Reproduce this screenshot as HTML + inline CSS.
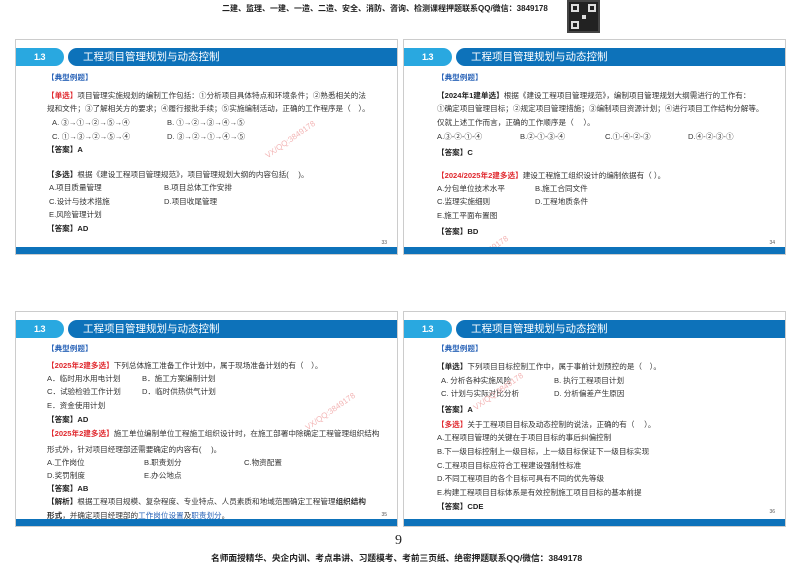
<!DOCTYPE html>
<html><head><meta charset="utf-8"><style>
*{margin:0;padding:0;box-sizing:border-box}
body{width:800px;height:566px;background:#fff;position:relative;overflow:hidden;font-family:"Liberation Sans","Noto Sans CJK SC",sans-serif;color:#333}
.s{position:absolute;width:383px;height:216px;border:1px solid #ccc;background:#fff;overflow:hidden}
.tab{position:absolute;left:0;top:8px;width:48px;height:18px;background:#29a8e0;border-radius:0 9px 9px 0;color:#fff;font-weight:bold;font-size:9px;line-height:18px;padding-left:18px;letter-spacing:-0.5px}
.bar{position:absolute;left:52px;right:0;top:8px;height:18px;background:#0d72ba;border-radius:9px 0 0 9px;color:#fff;font-size:10.5px;line-height:18px;padding-left:15px}
.bot{position:absolute;left:0;right:0;bottom:0;height:7px;background:#0d72ba}
.pn{position:absolute;right:10px;font-size:5px;color:#555}
.l{position:absolute;font-size:7.6px;line-height:10px;white-space:nowrap;color:#333}
.b{font-weight:bold;color:#222}
.r{color:#e0282e;font-weight:bold}
.bl{color:#2a64b8;font-weight:bold}
.u{color:#2a64b8;text-decoration:underline}
.wm{position:absolute;font-size:8px;color:#f3b5b5;transform:rotate(-35deg);white-space:nowrap}
</style></head><body>
<div style="position:absolute;left:222px;top:3px;font-size:8px;font-weight:bold;color:#222;white-space:nowrap">二建、监理、一建、一造、二造、安全、消防、咨询、检测课程押题联系QQ/微信：3849178</div>
<div style="position:absolute;left:567px;top:0;width:33px;height:33px;background:#222;border:2px solid #444">
<div style="position:absolute;left:2px;top:2px;width:8px;height:8px;border:2px solid #ddd"></div>
<div style="position:absolute;right:2px;top:2px;width:8px;height:8px;border:2px solid #ddd"></div>
<div style="position:absolute;left:2px;bottom:2px;width:8px;height:8px;border:2px solid #ddd"></div>
<div style="position:absolute;left:13px;top:13px;width:4px;height:4px;background:#ddd"></div>
</div>

<!-- slide 1 -->
<div class="s" style="left:15px;top:39px">
<div class="tab">1.3</div><div class="bar">工程项目管理规划与动态控制</div>
<div class="l bl" style="left:31px;top:33px">【典型例题】</div>
<div class="l" style="left:31px;top:51px"><span class="r">【单选】</span>项目管理实施规划的编制工作包括：①分析项目具体特点和环境条件；②熟悉相关的法</div>
<div class="l" style="left:31px;top:64px">规和文件；③了解相关方的要求；④履行报批手续；⑤实施编制活动，正确的工作程序是（　）。</div>
<div class="l" style="left:36px;top:78px">A. ③→①→②→⑤→④</div><div class="l" style="left:151px;top:78px">B. ①→②→③→④→⑤</div>
<div class="l" style="left:36px;top:92px">C. ①→③→②→⑤→④</div><div class="l" style="left:151px;top:92px">D. ③→②→①→④→⑤</div>
<div class="l b" style="left:31px;top:105px">【答案】A</div>
<div class="l" style="left:31px;top:130px"><span class="b">【多选】</span>根据《建设工程项目管理规范》，项目管理规划大纲的内容包括(　 )。</div>
<div class="l" style="left:33px;top:143px">A.项目质量管理</div><div class="l" style="left:148px;top:143px">B.项目总体工作安排</div>
<div class="l" style="left:33px;top:157px">C.设计与技术措施</div><div class="l" style="left:148px;top:157px">D.项目收尾管理</div>
<div class="l" style="left:33px;top:170px">E.风险管理计划</div>
<div class="l b" style="left:31px;top:184px">【答案】AD</div>
<div class="pn" style="top:200px">33</div>
<div class="wm" style="left:245px;top:95px">VX/QQ:3849178</div>
<div class="bot"></div>
</div>

<!-- slide 2 -->
<div class="s" style="left:403px;top:39px">
<div class="tab">1.3</div><div class="bar">工程项目管理规划与动态控制</div>
<div class="l bl" style="left:33px;top:33px">【典型例题】</div>
<div class="l" style="left:33px;top:51px"><span class="b">【2024年1建单选】</span>根据《建设工程项目管理规范》，编制项目管理规划大纲需进行的工作有：</div>
<div class="l" style="left:33px;top:64px">①确定项目管理目标；②规定项目管理措施；③编制项目资源计划；④进行项目工作结构分解等。</div>
<div class="l" style="left:33px;top:78px">仅就上述工作而言，正确的工作顺序是（　 ）。</div>
<div class="l" style="left:33px;top:92px">A.③-②-①-④</div><div class="l" style="left:116px;top:92px">B.②-①-③-④</div><div class="l" style="left:201px;top:92px">C.①-④-②-③</div><div class="l" style="left:284px;top:92px">D.④-②-③-①</div>
<div class="l b" style="left:33px;top:108px">【答案】C</div>
<div class="l" style="left:33px;top:131px"><span class="r">【2024/2025年2建多选】</span>建设工程施工组织设计的编制依据有（ ）。</div>
<div class="l" style="left:33px;top:144px">A.分包单位技术水平</div><div class="l" style="left:131px;top:144px">B.施工合同文件</div>
<div class="l" style="left:33px;top:157px">C.监理实施细则</div><div class="l" style="left:131px;top:157px">D.工程地质条件</div>
<div class="l" style="left:33px;top:171px">E.施工平面布置图</div>
<div class="l b" style="left:33px;top:187px">【答案】BD</div>
<div class="pn" style="top:200px">34</div>
<div class="wm" style="left:50px;top:210px">VX/QQ:3849178</div>
<div class="bot"></div>
</div>

<!-- slide 3 -->
<div class="s" style="left:15px;top:311px">
<div class="tab">1.3</div><div class="bar">工程项目管理规划与动态控制</div>
<div class="l bl" style="left:31px;top:32px">【典型例题】</div>
<div class="l" style="left:31px;top:49px"><span class="r">【2025年2建多选】</span>下列总体施工准备工作计划中，属于现场准备计划的有（　）。</div>
<div class="l" style="left:31px;top:62px">A．临时用水用电计划</div><div class="l" style="left:126px;top:62px">B．施工方案编制计划</div>
<div class="l" style="left:31px;top:75px">C．试验检验工作计划</div><div class="l" style="left:126px;top:75px">D．临时供热供气计划</div>
<div class="l" style="left:31px;top:89px">E．资金使用计划</div>
<div class="l b" style="left:31px;top:103px">【答案】AD</div>
<div class="l" style="left:31px;top:117px"><span class="r">【2025年2建多选】</span>施工单位编制单位工程施工组织设计时，在施工部署中除确定工程管理组织结构</div>
<div class="l" style="left:31px;top:133px">形式外，针对项目经理部还需要确定的内容有(　 )。</div>
<div class="l" style="left:31px;top:146px">A.工作岗位</div><div class="l" style="left:128px;top:146px">B.职责划分</div><div class="l" style="left:228px;top:146px">C.物资配置</div>
<div class="l" style="left:31px;top:159px">D.奖罚制度</div><div class="l" style="left:128px;top:159px">E.办公地点</div>
<div class="l b" style="left:31px;top:172px">【答案】AB</div>
<div class="l" style="left:31px;top:185px"><span class="b">【解析】</span>根据工程项目规模、复杂程度、专业特点、人员素质和地域范围确定工程管理<b>组织结构</b></div>
<div class="l" style="left:31px;top:199px"><b>形式</b>，并确定项目经理部的<span class="u">工作岗位设置</span>及<span class="u">职责划分</span>。</div>
<div class="pn" style="top:200px">35</div>
<div class="wm" style="left:285px;top:95px">VX/QQ:3849178</div>
<div class="bot"></div>
</div>

<!-- slide 4 -->
<div class="s" style="left:403px;top:311px">
<div class="tab">1.3</div><div class="bar">工程项目管理规划与动态控制</div>
<div class="l bl" style="left:33px;top:32px">【典型例题】</div>
<div class="l" style="left:33px;top:50px"><span class="b">【单选】</span>下列项目目标控制工作中，属于事前计划预控的是（　）。</div>
<div class="l" style="left:37px;top:64px">A. 分析各种实施风险</div><div class="l" style="left:150px;top:64px">B. 执行工程项目计划</div>
<div class="l" style="left:37px;top:77px">C. 计划与实际对比分析</div><div class="l" style="left:150px;top:77px">D. 分析偏差产生原因</div>
<div class="l b" style="left:33px;top:93px">【答案】A</div>
<div class="l" style="left:33px;top:108px"><span class="r">【多选】</span>关于工程项目目标及动态控制的说法，正确的有（　 ）。</div>
<div class="l" style="left:33px;top:121px">A.工程项目管理的关键在于项目目标的事后纠偏控制</div>
<div class="l" style="left:33px;top:135px">B.下一级目标控制上一级目标，上一级目标保证下一级目标实现</div>
<div class="l" style="left:33px;top:149px">C.工程项目目标应符合工程建设强制性标准</div>
<div class="l" style="left:33px;top:162px">D.不同工程项目的各个目标可具有不同的优先等级</div>
<div class="l" style="left:33px;top:176px">E.构建工程项目目标体系是有效控制施工项目目标的基本前提</div>
<div class="l b" style="left:33px;top:190px">【答案】CDE</div>
<div class="pn" style="top:197px">36</div>
<div class="wm" style="left:65px;top:75px">VX/QQ:3849178</div>
<div class="bot"></div>
</div>

<div style="position:absolute;left:395px;top:533px;font-family:'Liberation Serif',serif;font-size:14px;color:#222">9</div>
<div style="position:absolute;left:211px;top:551px;font-size:8.7px;font-weight:bold;color:#222;white-space:nowrap">名师面授精华、央企内训、考点串讲、习题模考、考前三页纸、绝密押题联系QQ/微信：3849178</div>
</body></html>
